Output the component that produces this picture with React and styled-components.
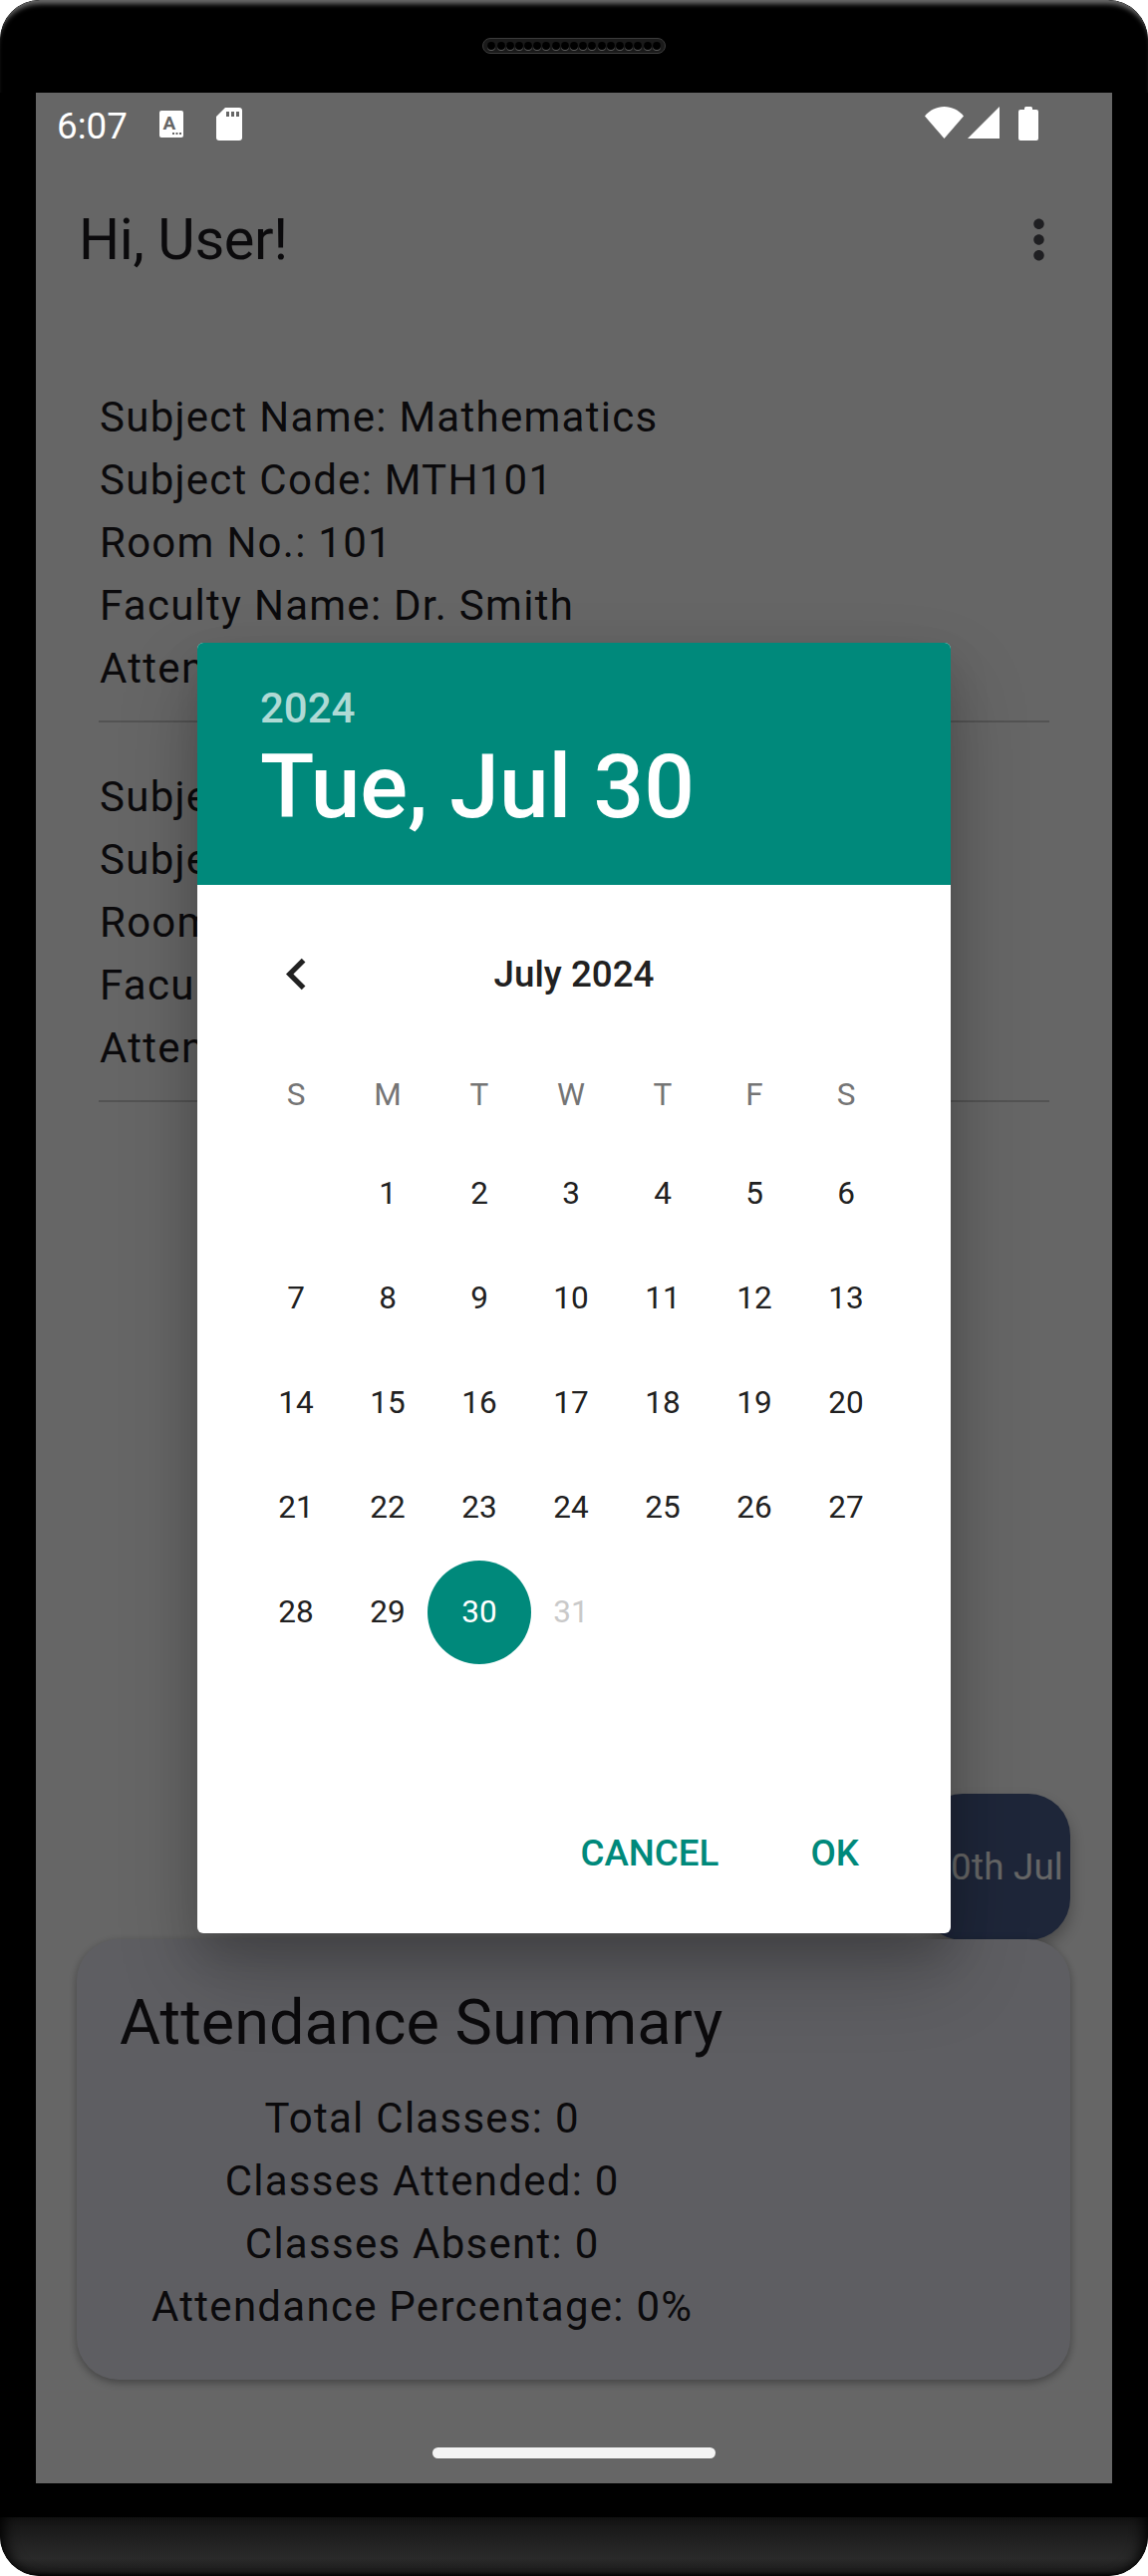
import React from "react";
import styled, { createGlobalStyle } from "styled-components";

const GlobalStyle = createGlobalStyle`
  html, body {
    margin: 0;
    padding: 0;
    background: #fff;
    font-family: Roboto, "Noto Sans", sans-serif;
  }
  * {
    box-sizing: border-box;
  }
`;

const TEAL = "#00897b";

const Device = styled.div`
  width: 1152px;
  height: 2585px;
  display: flex;
  flex-direction: column;
  background: #000;
  border-radius: 40px;
  overflow: hidden;
`;

const TopBezel = styled.div`
  height: 93px;
  padding-top: 38px;
  display: flex;
  justify-content: center;
  align-items: flex-start;
  border-radius: 40px 40px 0 0;
  background: #000;
  box-shadow: inset 0 7px 5px -3px #6a6a6a;
`;

const Speaker = styled.div`
  width: 184px;
  height: 16px;
  display: flex;
  align-items: center;
  justify-content: center;
  gap: 1.2px;
  border-radius: 8px;
  background: #1a1a1a;
  border: 1px solid #3c3c3c;
`;

const SpeakerHole = styled.span`
  width: 8px;
  height: 8px;
  border-radius: 50%;
  background: #000;
  box-shadow: 0 1px 0 #5c5c5c;
`;

const Screen = styled.div`
  position: relative;
  height: 2399px;
  margin: 0 36px;
  display: flex;
  flex-direction: column;
  background: #fff;
  overflow: hidden;
`;

const StatusBar = styled.div`
  position: relative;
  z-index: 3;
  height: 66px;
  padding: 14px 74px 0 21px;
  display: flex;
  align-items: flex-start;
  color: #fff;
`;

const Time = styled.span`
  font-size: 36.75px;
  line-height: 36px;
  width: 103px;
  margin-top: 2px;
`;

const NoticeIcons = styled.div`
  display: flex;
  align-items: flex-start;
  gap: 33px;
  flex: 1;
  margin-top: 4px;
`;

const SystemIcons = styled.div`
  display: flex;
  align-items: flex-start;
`;

const WifiIcon = styled.svg`
  margin-right: 4px;
`;

const SignalIcon = styled.svg`
  margin-right: 19px;
`;

const AppBar = styled.header`
  height: 162px;
  padding: 0 74px 0 43px;
  display: flex;
  align-items: center;
  justify-content: space-between;
  background: #fff;
`;

const AppTitle = styled.h1`
  margin: 0;
  font-size: 57.75px;
  font-weight: 400;
  letter-spacing: -0.4px;
  color: #1c1b1f;
`;

const MoreButton = styled.svg`
  display: block;
  fill: #4f4e55;
  margin-right: -32px;
`;

const Content = styled.main`
  flex: 1;
  display: flex;
  flex-direction: column;
  padding-top: 66px;
  background: #fff;
`;

const SubjectList = styled.div`
  margin: 0 63px;
`;

const SubjectItem = styled.div`
  padding: 0 0 21px 1px;
  margin-bottom: 43px;
  border-bottom: 2px solid #cfcfcf;
`;

const BodyLine = styled.div`
  font-size: 42px;
  line-height: 63px;
  letter-spacing: 1.27px;
  color: #1c1b1f;
  white-space: nowrap;
`;

const ActionRow = styled.div`
  margin: auto 42px 0 0;
  display: flex;
  justify-content: flex-end;
`;

const DateButton = styled.button`
  height: 147px;
  padding: 0 7px 0 9px;
  border: 0;
  border-radius: 42px;
  background: #4b5f8f;
  color: #fff;
  font-family: inherit;
  font-size: 36.75px;
  letter-spacing: 0.2px;
  box-shadow: 0 8px 16px rgba(0, 0, 0, 0.3);
`;

const SummaryCard = styled.section`
  height: 442px;
  margin: -1px 42px 0 41px;
  padding: 47px 43px 0;
  border-radius: 42px;
  background: #ebebf5;
  box-shadow: 0 3px 8px rgba(0, 0, 0, 0.35);
`;

const SummaryTitle = styled.h2`
  margin: 0 0 27px;
  font-size: 63px;
  font-weight: 400;
  line-height: 74px;
  color: #1c1b1f;
`;

const SummaryLines = styled.div`
  display: inline-block;
  margin-left: 32px;
  text-align: center;
`;

const NavArea = styled.div`
  position: relative;
  z-index: 3;
  height: 104px;
  padding-top: 68px;
  display: flex;
  justify-content: center;
`;

const HomeHandle = styled.div`
  width: 284px;
  height: 11px;
  border-radius: 6px;
  background: #f4f4f4;
`;

const Scrim = styled.div`
  position: absolute;
  inset: 0;
  z-index: 2;
  display: flex;
  align-items: center;
  justify-content: center;
  background: rgba(0, 0, 0, 0.6);
`;

const Dialog = styled.div`
  width: 756px;
  height: 1295px;
  display: flex;
  flex-direction: column;
  border-radius: 6px;
  overflow: hidden;
  background: #fff;
  box-shadow: 0 40px 80px rgba(0, 0, 0, 0.22), 0 20px 40px rgba(0, 0, 0, 0.14);
`;

const DialogHeader = styled.div`
  height: 243px;
  padding: 42px 63px 0;
  background: ${TEAL};
  color: #fff;
`;

const HeaderYear = styled.div`
  font-size: 42px;
  font-weight: 500;
  line-height: 48px;
  color: rgba(255, 255, 255, 0.7);
`;

const HeaderDate = styled.div`
  margin-top: 3px;
  font-size: 89.25px;
  font-weight: 500;
  line-height: 104px;
`;

const MonthRow = styled.div`
  height: 178px;
  padding: 0 53px;
  display: grid;
  grid-template-columns: 1fr auto 1fr;
  align-items: center;
`;

const PrevMonth = styled.div`
  width: 92px;
  display: flex;
  justify-content: center;
  svg {
    display: block;
    fill: #212121;
  }
`;

const MonthLabel = styled.div`
  font-size: 36.75px;
  font-weight: 500;
  color: #212121;
`;

const Calendar = styled.div`
  padding: 0 53px;
`;

const WeekHeader = styled.div`
  height: 64px;
  margin-bottom: 15px;
  display: grid;
  grid-template-columns: repeat(7, 92px);
  align-items: center;
  justify-items: center;
  font-size: 31.5px;
  color: #757575;
`;

const DaysGrid = styled.div`
  display: grid;
  grid-template-columns: repeat(7, 92px);
  grid-auto-rows: 105px;
`;

const DayCell = styled.div`
  display: flex;
  align-items: center;
  justify-content: center;
`;

const DayNumber = styled.span`
  flex: none;
  width: 104px;
  height: 104px;
  display: flex;
  align-items: center;
  justify-content: center;
  border-radius: 50%;
  font-size: 31.5px;
  color: ${(p) => (p.$selected ? "#fff" : p.$muted ? "#c9c9c9" : "#212121")};
  background: ${(p) => (p.$selected ? TEAL : "transparent")};
`;

const DialogActions = styled.div`
  margin-top: auto;
  height: 162px;
  padding-right: 92px;
  display: flex;
  align-items: center;
  justify-content: flex-end;
  gap: 92px;
`;

const TextButton = styled.button`
  padding: 0;
  border: 0;
  background: none;
  font-family: inherit;
  font-size: 36.75px;
  font-weight: 500;
  letter-spacing: 0;
  text-transform: uppercase;
  color: ${TEAL};
`;

const BottomGap = styled.div`
  height: 34px;
  background: #000;
`;

const Chin = styled.div`
  height: 59px;
  border-radius: 0 0 40px 40px;
  background: linear-gradient(#141414, #2a2a2a 70%, #1c1c1c 92%, #050505);
  box-shadow: inset 12px 0 14px -8px #000, inset -12px 0 14px -8px #000;
`;

const subjects = [
  ["Subject Name: Mathematics", "Subject Code: MTH101", "Room No.: 101", "Faculty Name: Dr. Smith", "Attendance: 0%"],
  ["Subject Name: Physics", "Subject Code: PHY101", "Room No.: 102", "Faculty Name: Dr. Jones", "Attendance: 0%"],
];

const summary = ["Total Classes: 0", "Classes Attended: 0", "Classes Absent: 0", "Attendance Percentage: 0%"];

const weekDays = ["S", "M", "T", "W", "T", "F", "S"];
const days = ["", ...Array.from({ length: 31 }, (_, i) => String(i + 1))];

const App = () => {
  return (
    <>
      <GlobalStyle />
      <Device>
        <TopBezel>
          <Speaker>
            {Array.from({ length: 19 }, (_, i) => (
              <SpeakerHole key={i} />
            ))}
          </Speaker>
        </TopBezel>
        <Screen>
          <StatusBar>
            <Time>6:07</Time>
            <NoticeIcons>
              <svg width="24" height="27" viewBox="0 0 24 27">
                <rect width="24" height="27" rx="2" fill="#fff" />
                <text x="10" y="19" fontSize="19" fontWeight="700" fontFamily="Roboto" textAnchor="middle" fill="#666">
                  A
                </text>
                <rect x="13" y="22" width="2" height="2" fill="#666" />
                <rect x="16.5" y="22" width="2" height="2" fill="#666" />
                <rect x="20" y="22" width="2" height="2" fill="#666" />
              </svg>
              <svg width="26" height="33" viewBox="0 0 26 33" style={{ marginTop: -3 }}>
                <path d="M9 0H23a3 3 0 0 1 3 3V30a3 3 0 0 1-3 3H3a3 3 0 0 1-3-3V9Z" fill="#fff" />
                <rect x="10" y="4" width="3" height="5" fill="#666" />
                <rect x="15" y="4" width="3" height="5" fill="#666" />
                <rect x="20" y="4" width="3" height="5" fill="#666" />
              </svg>
            </NoticeIcons>
            <SystemIcons>
              <WifiIcon width="39" height="32" viewBox="0 0 39 32">
                <path d="M19.5 32L0 9.5C5 3.5 12 0 19.5 0S34 3.5 39 9.5Z" fill="#fff" />
              </WifiIcon>
              <SignalIcon width="32" height="32" viewBox="0 0 32 32">
                <path d="M32 0V32H0Z" fill="#fff" />
              </SignalIcon>
              <svg width="20" height="34" viewBox="0 0 20 34">
                <path d="M6 3V1.5A1.5 1.5 0 0 1 7.5 0h5A1.5 1.5 0 0 1 14 1.5V3h4a2 2 0 0 1 2 2V32a2 2 0 0 1-2 2H2a2 2 0 0 1-2-2V5a2 2 0 0 1 2-2Z" fill="#fff" />
              </svg>
            </SystemIcons>
          </StatusBar>

          <AppBar>
            <AppTitle>Hi, User!</AppTitle>
            <MoreButton width="63" height="63" viewBox="0 0 24 24">
              <path d="M12 8c1.1 0 2-.9 2-2s-.9-2-2-2-2 .9-2 2 .9 2 2 2zm0 2c-1.1 0-2 .9-2 2s.9 2 2 2 2-.9 2-2-.9-2-2-2zm0 6c-1.1 0-2 .9-2 2s.9 2 2 2 2-.9 2-2-.9-2-2-2z" />
            </MoreButton>
          </AppBar>

          <Content>
            <SubjectList>
              {subjects.map((lines) => (
                <SubjectItem key={lines[1]}>
                  {lines.map((line) => (
                    <BodyLine key={line}>{line}</BodyLine>
                  ))}
                </SubjectItem>
              ))}
            </SubjectList>
            <ActionRow>
              <DateButton>30th Jul</DateButton>
            </ActionRow>
            <SummaryCard>
              <SummaryTitle>Attendance Summary</SummaryTitle>
              <SummaryLines>
                {summary.map((line) => (
                  <BodyLine key={line}>{line}</BodyLine>
                ))}
              </SummaryLines>
            </SummaryCard>
            <NavArea>
              <HomeHandle />
            </NavArea>
          </Content>

          <Scrim>
            <Dialog>
              <DialogHeader>
                <HeaderYear>2024</HeaderYear>
                <HeaderDate>Tue, Jul 30</HeaderDate>
              </DialogHeader>
              <MonthRow>
                <PrevMonth>
                  <svg width="63" height="63" viewBox="0 0 24 24">
                    <path d="M15.41 7.41L14 6l-6 6 6 6 1.41-1.41L10.83 12z" />
                  </svg>
                </PrevMonth>
                <MonthLabel>July 2024</MonthLabel>
              </MonthRow>
              <Calendar>
                <WeekHeader>
                  {weekDays.map((d, i) => (
                    <span key={i}>{d}</span>
                  ))}
                </WeekHeader>
                <DaysGrid>
                  {days.map((d, i) => (
                    <DayCell key={i}>
                      {d && (
                        <DayNumber $selected={d === "30"} $muted={d === "31"}>
                          {d}
                        </DayNumber>
                      )}
                    </DayCell>
                  ))}
                </DaysGrid>
              </Calendar>
              <DialogActions>
                <TextButton>Cancel</TextButton>
                <TextButton>OK</TextButton>
              </DialogActions>
            </Dialog>
          </Scrim>
        </Screen>
        <BottomGap />
        <Chin />
      </Device>
    </>
  );
};

export default App;
